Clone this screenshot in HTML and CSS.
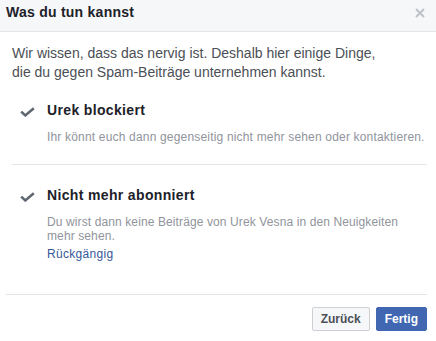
FILE: index.html
```html
<!DOCTYPE html>
<html lang="de">
<head>
<meta charset="utf-8">
<link rel="stylesheet" href="styles.css">
</head>
<body>
<div class="dialog">
  <div class="header">
    <span class="title">Was du tun kannst</span>
    <svg class="close" width="10" height="10" viewBox="0 0 10 10"><path d="M1 1L9 9M9 1L1 9" stroke="#bec3c9" stroke-width="2" fill="none"/></svg>
  </div>
  <div class="content">
    <p class="intro">Wir wissen, dass das nervig ist. Deshalb hier einige Dinge,<br>die du gegen Spam-Beiträge unternehmen kannst.</p>
    <div class="item first">
      <svg class="check" width="15" height="10" viewBox="0 0 15 10"><path d="M1.2 4.6L5.3 8.4L13.8 1.2" stroke="#606770" stroke-width="2.6" fill="none"/></svg>
      <div class="text">
        <div class="item-title">Urek blockiert</div>
        <div class="desc wide">Ihr könnt euch dann gegenseitig nicht mehr sehen oder kontaktieren.</div>
      </div>
    </div>
    <div class="item second">
      <svg class="check" width="15" height="10" viewBox="0 0 15 10"><path d="M1.2 4.6L5.3 8.4L13.8 1.2" stroke="#606770" stroke-width="2.6" fill="none"/></svg>
      <div class="text">
        <div class="item-title">Nicht mehr abonniert</div>
        <div class="desc">Du wirst dann keine Beiträge von Urek Vesna in den Neuigkeiten<br>mehr sehen.</div>
        <a class="undo" href="#">Rückgängig</a>
      </div>
    </div>
  </div>
  <div class="footer">
    <button class="btn secondary">Zurück</button>
    <button class="btn primary">Fertig</button>
  </div>
</div>
</body>
</html>
```
FILE: styles.css
```css
html, body {
  margin: 0;
  padding: 0;
  background: #ffffff;
}
body {
  font-family: "Liberation Sans", Arial, Helvetica, sans-serif;
  color: #1d2129;
}
.dialog {
  width: 436px;
  height: 341px;
  overflow: hidden;
}
.header {
  display: flex;
  justify-content: space-between;
  align-items: flex-start;
  background: #f6f7f9;
  border-bottom: 1px solid #e5e5e5;
  height: 32px;
  box-sizing: border-box;
  padding: 3px 11px 0 6px;
}
.title {
  font-size: 14px;
  font-weight: bold;
  line-height: 18px;
  letter-spacing: 0.25px;
  color: #1d2129;
}
.close {
  margin-top: 5px;
}
.content {
  padding: 12px 9px 0 12px;
}
.intro {
  margin: 0;
  font-size: 14px;
  line-height: 19px;
  color: #4b4f56;
}
.item {
  display: flex;
  padding-left: 8px;
}
.item.first {
  padding-top: 19px;
  padding-bottom: 20px;
  border-bottom: 1px solid #e5e5e5;
}
.item.second {
  padding-top: 21px;
}
.check {
  flex: none;
  margin-top: 6px;
  margin-right: 12px;
}
.text {
  min-width: 0;
}
.item-title {
  font-size: 14px;
  font-weight: bold;
  line-height: 18px;
  letter-spacing: 0.35px;
  color: #1d2129;
  margin-bottom: 11px;
}
.desc {
  font-size: 12px;
  line-height: 14px;
  letter-spacing: 0.11px;
  color: #90949c;
  white-space: nowrap;
}
.desc.wide {
  letter-spacing: 0.18px;
}
.undo {
  display: block;
  margin-top: 3px;
  font-size: 12px;
  line-height: 16px;
  letter-spacing: 0.3px;
  color: #365899;
  text-decoration: none;
}
.footer {
  display: flex;
  justify-content: flex-end;
  gap: 6px;
  margin: 32px 9px 0 6px;
  border-top: 1px solid #e5e5e5;
  padding-top: 12px;
}
.btn {
  font-family: "Liberation Sans", Arial, Helvetica, sans-serif;
  font-size: 12px;
  font-weight: bold;
  height: 24px;
  line-height: 22px;
  padding: 0 8px;
  border-radius: 2px;
  box-sizing: border-box;
}
.secondary {
  background: #f6f7f9;
  border: 1px solid #ced0d4;
  color: #4b4f56;
}
.primary {
  background: #4267b2;
  border: 1px solid #4267b2;
  color: #ffffff;
}
```
